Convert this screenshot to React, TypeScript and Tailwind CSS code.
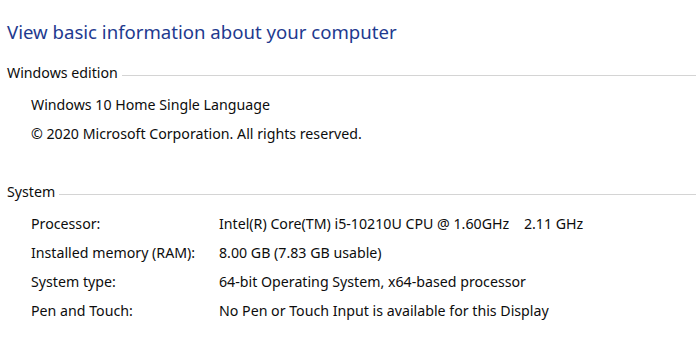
import React from "react";

const rows1 = ["Windows 10 Home Single Language", "© 2020 Microsoft Corporation. All rights reserved."];
const rows2: [string, string][] = [
  ["Processor:", "Intel(R) Core(TM) i5-10210U CPU @ 1.60GHz    2.11 GHz"],
  ["Installed memory (RAM):", "8.00 GB (7.83 GB usable)"],
  ["System type:", "64-bit Operating System, x64-based processor"],
  ["Pen and Touch:", "No Pen or Touch Input is available for this Display"],
];

function Heading({ label, className }: { label: string; className?: string }) {
  return (
    <div className={"flex h-[20px] leading-[20px] pl-[7px] " + (className ?? "")}>
      <span>{label}</span>
      <div className="flex-1 h-px bg-[#d4d4d4] mt-[12px] ml-[4px]" />
    </div>
  );
}

export default function App() {
  return (
    <div className="w-[696px] h-[344px] bg-white text-[14.2px] text-[#0d0d0d] overflow-hidden" style={{ fontFamily: '"Noto Sans", sans-serif' }}>
      <div className="pt-[18px] pl-[7px] text-[18.6px] leading-[28px] text-[#1e3a8f]">
        View basic information about your computer
      </div>
      <Heading label="Windows edition" className="mt-[17px]" />
      <div className="mt-[7px] pl-[31px]">
        {rows1.map((r) => (
          <div key={r} className="h-[29px] leading-[29px] whitespace-pre">{r}</div>
        ))}
      </div>
      <Heading label="System" className="mt-[34px]" />
      <div className="mt-[7px] pl-[31px]">
        {rows2.map(([k, v]) => (
          <div key={k} className="grid grid-cols-[188px_1fr] h-[29px] leading-[29px]">
            <span>{k}</span>
            <span className="whitespace-pre">{v}</span>
          </div>
        ))}
      </div>
    </div>
  );
}
